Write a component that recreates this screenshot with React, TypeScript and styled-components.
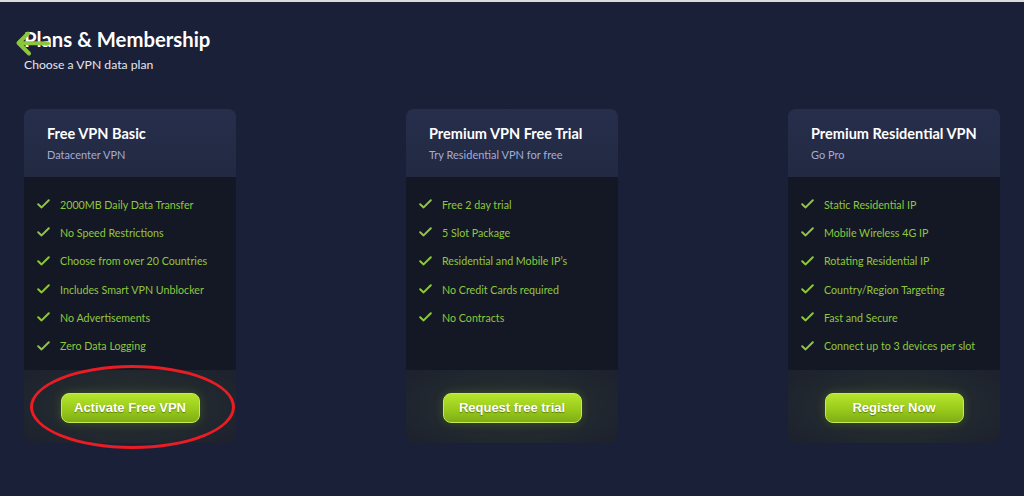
import React from "react";
import styled, { createGlobalStyle } from "styled-components";

const Global = createGlobalStyle`
  html, body { margin: 0; padding: 0; background: #1b2039; }
  * { box-sizing: border-box; }
`;

const Page = styled.div`
  min-height: 496px;
  border-top: 2px solid #dcdcdc;
  background: #1b2039;
  padding: 25px 24px 0 24px;
  font-family: Lato, "Open Sans", sans-serif;
`;

const Header = styled.header`
  position: relative;
`;

const Title = styled.h1`
  margin: 0;
  font-size: 20.3px;
  line-height: 24px;
  font-weight: 700;
  color: #ffffff;
`;

const Subtitle = styled.p`
  margin: 6px 0 0;
  font-size: 12.2px;
  line-height: 16px;
  color: #e4e6ef;
`;

const BackArrow = styled.svg`
  position: absolute;
  left: -10px;
  top: 2px;
`;

const Cards = styled.div`
  margin-top: 36px;
  display: flex;
  justify-content: space-between;
`;

const Card = styled.section`
  width: 212px;
  border-radius: 8px;
  display: flex;
  flex-direction: column;
`;

const CardHead = styled.div`
  height: 68px;
  padding: 16px 23px 0;
  border-radius: 8px 8px 0 0;
  background: linear-gradient(180deg, #272e4c 0%, #222941 100%);
`;

const CardTitle = styled.h2`
  margin: 0;
  font-size: 14.5px;
  line-height: 18px;
  font-weight: 700;
  color: #ffffff;
  white-space: nowrap;
`;

const CardSub = styled.div`
  margin-top: 5px;
  font-size: 11px;
  line-height: 14px;
  color: #a3abd6;
`;

const CardBody = styled.ul`
  list-style: none;
  margin: 0;
  height: 193px;
  padding: 13px 0 0 13px;
  background: #141824;
`;

const Feature = styled.li`
  display: flex;
  align-items: center;
  height: 28.3px;
  gap: 10px;
  font-size: 10.7px;
  color: #8fc73d;
  white-space: nowrap;
`;

const CardFoot = styled.div`
  position: relative;
  height: 73px;
  display: flex;
  align-items: center;
  justify-content: center;
  padding-top: 2px;
  border-radius: 0 0 8px 8px;
  background:
    radial-gradient(ellipse 60% 70% at 50% 50%, rgba(110, 140, 50, 0.16), rgba(0, 0, 0, 0) 100%),
    #1d222e;
`;

const ActionButton = styled.button`
  width: 139px;
  height: 30px;
  border-radius: 8px;
  border: 1px solid #c5ec55;
  background: linear-gradient(180deg, #b5e52b 0%, #9ccd1d 50%, #7eae14 100%);
  box-shadow: 0 0 10px rgba(140, 190, 40, 0.25);
  color: #ffffff;
  font-family: "Liberation Sans", Arial, sans-serif;
  font-weight: 700;
  font-size: 13px;
  text-shadow: 0 1px 1px rgba(60, 80, 0, 0.6);
  cursor: pointer;
  padding: 0;
`;

const Highlight = styled.div`
  position: absolute;
  left: 6px;
  top: -5px;
  width: 205px;
  height: 84px;
  border: 3px solid #ea1c24;
  border-radius: 50%;
  pointer-events: none;
`;

const Check = () => (
  <svg width="13" height="10" viewBox="0 0 13 10">
    <path d="M1.2 5.2 L4.6 8.4 L11.8 1.2" fill="none" stroke="#8fc73d" strokeWidth="2" strokeLinecap="round" strokeLinejoin="round" />
  </svg>
);

type Plan = {
  title: string;
  sub: string;
  features: string[];
  cta: string;
  highlight?: boolean;
};

const plans: Plan[] = [
  {
    title: "Free VPN Basic",
    sub: "Datacenter VPN",
    features: [
      "2000MB Daily Data Transfer",
      "No Speed Restrictions",
      "Choose from over 20 Countries",
      "Includes Smart VPN Unblocker",
      "No Advertisements",
      "Zero Data Logging",
    ],
    cta: "Activate Free VPN",
    highlight: true,
  },
  {
    title: "Premium VPN Free Trial",
    sub: "Try Residential VPN for free",
    features: [
      "Free 2 day trial",
      "5 Slot Package",
      "Residential and Mobile IP\u2019s",
      "No Credit Cards required",
      "No Contracts",
    ],
    cta: "Request free trial",
  },
  {
    title: "Premium Residential VPN",
    sub: "Go Pro",
    features: [
      "Static Residential IP",
      "Mobile Wireless 4G IP",
      "Rotating Residential IP",
      "Country/Region Targeting",
      "Fast and Secure",
      "Connect up to 3 devices per slot",
    ],
    cta: "Register Now",
  },
];

export default function App() {
  return (
    <>
      <Global />
      <Page>
        <Header>
          <Title>Plans &amp; Membership</Title>
          <Subtitle>Choose a VPN data plan</Subtitle>
          <BackArrow width="40" height="30" viewBox="0 0 40 30">
            <path d="M4.5 14 L34 14.5 M14 4.5 L4.5 14 L15 24.5" fill="none" stroke="#8cc63a" strokeWidth="4" strokeLinecap="round" strokeLinejoin="round" />
          </BackArrow>
        </Header>
        <Cards>
          {plans.map((p) => (
            <Card key={p.title}>
              <CardHead>
                <CardTitle>{p.title}</CardTitle>
                <CardSub>{p.sub}</CardSub>
              </CardHead>
              <CardBody>
                {p.features.map((f) => (
                  <Feature key={f}>
                    <Check />
                    {f}
                  </Feature>
                ))}
              </CardBody>
              <CardFoot>
                <ActionButton>{p.cta}</ActionButton>
                {p.highlight && <Highlight />}
              </CardFoot>
            </Card>
          ))}
        </Cards>
      </Page>
    </>
  );
}
